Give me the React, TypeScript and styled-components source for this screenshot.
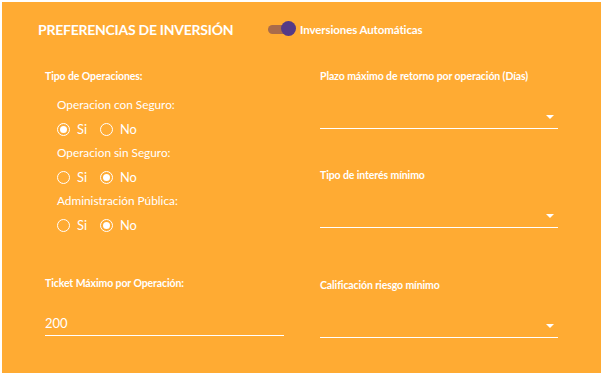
import styled, { createGlobalStyle } from 'styled-components'

const GlobalStyle = createGlobalStyle`
  html, body {
    margin: 0;
    padding: 0;
    background: #ffffff;
    font-family: Lato, 'Open Sans', sans-serif;
  }
`

const Page = styled.div`
  width: 603px;
  height: 377px;
  padding: 2px 2px 4px 2px;
  box-sizing: border-box;
`

const Panel = styled.div`
  height: 100%;
  background: #ffab33;
  color: #ffffff;
  box-sizing: border-box;
  padding: 17px 0 0 36px;
  display: flex;
  flex-direction: column;
`

const Header = styled.div`
  display: flex;
  align-items: center;
  height: 20px;
`

const Title = styled.h2`
  margin: 0;
  font-size: 14px;
  font-weight: 700;
  letter-spacing: -0.25px;
  width: 230px;
`

const Toggle = styled.div`
  position: relative;
  width: 28px;
  height: 12px;
  margin-right: 4px;
  display: flex;
  align-items: center;
`

const Track = styled.div`
  width: 24px;
  height: 9px;
  border-radius: 5px;
  background: #a96b4b;
`

const Knob = styled.div`
  position: absolute;
  right: 0;
  top: -2px;
  width: 15px;
  height: 15px;
  border-radius: 50%;
  background: #553a87;
`

const ToggleLabel = styled.span`
  font-size: 11.5px;
  font-weight: 700;
  letter-spacing: -0.1px;
`

const Columns = styled.div`
  display: grid;
  grid-template-columns: 275px 238px;
  margin-top: 31px;
  padding-left: 7px;
`

const Column = styled.div`
  display: flex;
  flex-direction: column;
`

const SectionLabel = styled.div<{ $top?: number }>`
  font-size: 10.5px;
  font-weight: 700;
  letter-spacing: -0.1px;
  margin-top: ${(p) => p.$top ?? 0}px;
  line-height: 12px;
  white-space: nowrap;
`

const Group = styled.div`
  padding-left: 12px;
  margin-top: 11px;
  display: flex;
  flex-direction: column;
`

const Question = styled.div`
  font-size: 11.8px;
  line-height: 24px;
  height: 24px;
`

const RadioRow = styled.div`
  display: flex;
  align-items: center;
  height: 24px;
`

const Radio = styled.span<{ $checked?: boolean }>`
  width: 11px;
  height: 11px;
  border: 1.2px solid #ffffff;
  border-radius: 50%;
  display: inline-flex;
  align-items: center;
  justify-content: center;
  box-sizing: content-box;
  &::after {
    content: '';
    width: 7px;
    height: 7px;
    border-radius: 50%;
    background: ${(p) => (p.$checked ? '#ffffff' : 'transparent')};
  }
`

const RadioText = styled.span`
  font-size: 12.8px;
  margin: 0 13px 0 7px;
`

const InputField = styled.div`
  width: 239px;
  margin-top: 26px;
  border-bottom: 1.2px solid #ffffff;
  font-size: 13px;
  line-height: 17px;
  padding-bottom: 3px;
`

const Select = styled.div<{ $top: number }>`
  width: 238px;
  height: 20px;
  margin-top: ${(p) => p.$top}px;
  border-bottom: 1.2px solid #ffffff;
  display: flex;
  justify-content: flex-end;
  align-items: center;
  padding: 0 4px 4px 0;
  box-sizing: border-box;
`

const Caret = styled.span`
  width: 0;
  height: 0;
  border-left: 4px solid transparent;
  border-right: 4px solid transparent;
  border-top: 4px solid #ffffff;
`

const questions = [
  { label: 'Operacion con Seguro:', value: 'si' },
  { label: 'Operacion sin Seguro:', value: 'no' },
  { label: 'Administración Pública:', value: 'no' },
]

export default function App() {
  return (
    <>
      <GlobalStyle />
      <Page>
        <Panel>
          <Header>
            <Title>PREFERENCIAS DE INVERSIÓN</Title>
            <Toggle>
              <Track />
              <Knob />
            </Toggle>
            <ToggleLabel>Inversiones Automáticas</ToggleLabel>
          </Header>
          <Columns>
            <Column>
              <SectionLabel>Tipo de Operaciones:</SectionLabel>
              <Group>
                {questions.map((q) => (
                  <div key={q.label}>
                    <Question>{q.label}</Question>
                    <RadioRow>
                      <Radio $checked={q.value === 'si'} />
                      <RadioText>Si</RadioText>
                      <Radio $checked={q.value === 'no'} />
                      <RadioText>No</RadioText>
                    </RadioRow>
                  </div>
                ))}
              </Group>
              <SectionLabel $top={40}>Ticket Máximo por Operación:</SectionLabel>
              <InputField>200</InputField>
            </Column>
            <Column>
              <SectionLabel>Plazo máximo de retorno por operación (Días)</SectionLabel>
              <Select $top={27}>
                <Caret />
              </Select>
              <SectionLabel $top={40}>Tipo de interés mínimo</SectionLabel>
              <Select $top={27}>
                <Caret />
              </Select>
              <SectionLabel $top={51}>Calificación riesgo mínimo</SectionLabel>
              <Select $top={27}>
                <Caret />
              </Select>
            </Column>
          </Columns>
        </Panel>
      </Page>
    </>
  )
}
